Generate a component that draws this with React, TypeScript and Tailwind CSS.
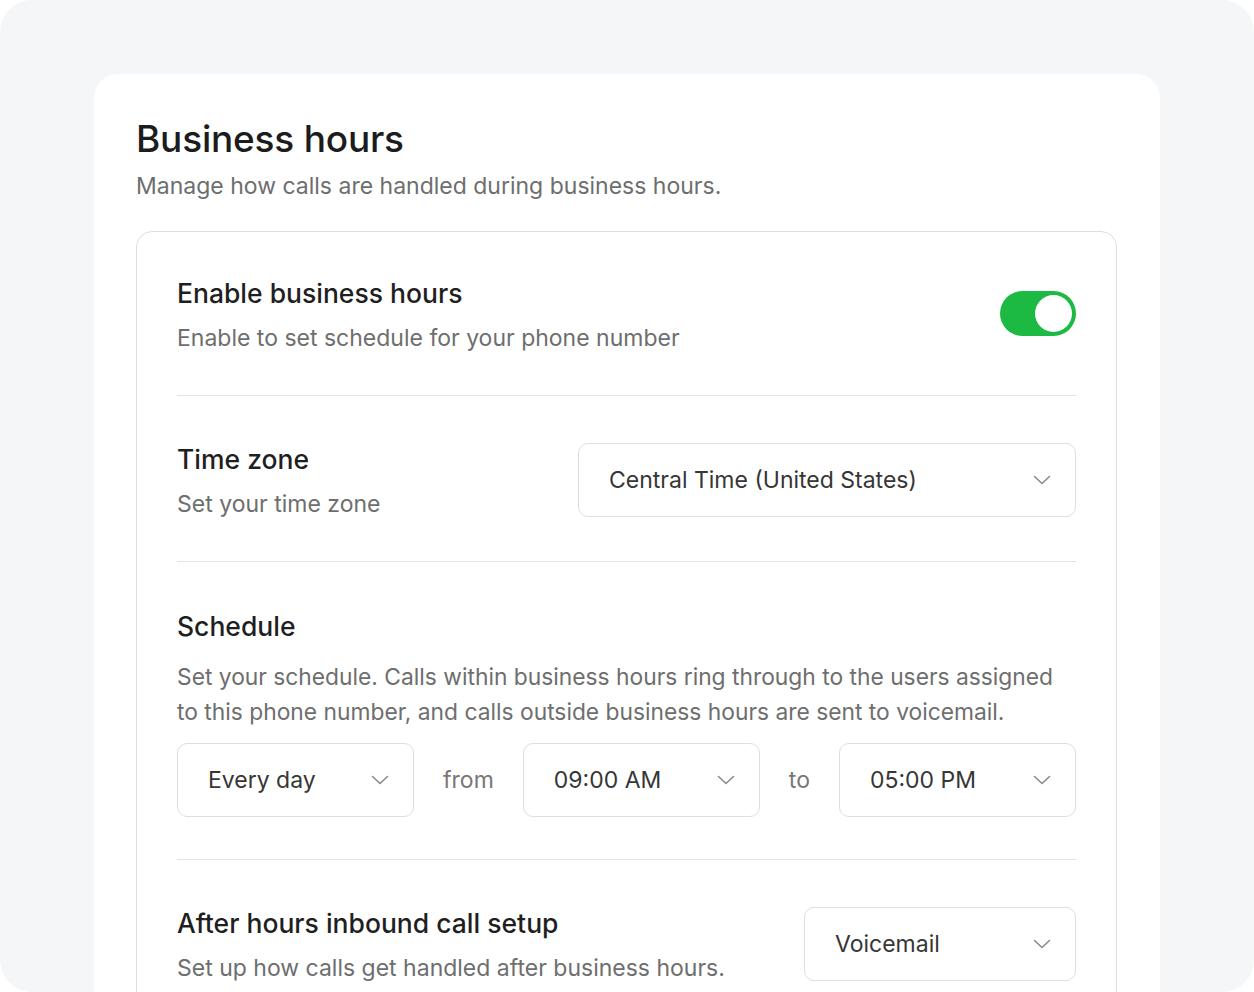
import React from "react"

const Chevron = () => (
  <svg width="18" height="10" viewBox="0 0 18 10" fill="none" className="shrink-0">
    <path d="M1.5 1.5L9 8.5L16.5 1.5" stroke="#8a8a8a" strokeWidth="1.6" strokeLinecap="round" strokeLinejoin="round" />
  </svg>
)

function Select({ value, className = "" }: { value: string; className?: string }) {
  return (
    <div className={`h-[74px] flex items-center justify-between pl-[30px] pr-[24px] border border-[#dedede] rounded-[10px] bg-white ${className}`}>
      <span className="text-[23px] text-[#363636] leading-[32px]">{value}</span>
      <Chevron />
    </div>
  )
}

function Toggle() {
  return (
    <div className="w-[76px] h-[45px] rounded-full bg-[#1dba43] flex items-center justify-end pr-[4px]">
      <div className="w-[37px] h-[37px] rounded-full bg-white" />
    </div>
  )
}

function Heading({ title, sub }: { title: string; sub: string }) {
  return (
    <div className="flex flex-col gap-[15px] translate-y-[2px]">
      <div className="text-[26.5px] leading-[30px] font-medium text-[#1f1f1f]">{title}</div>
      <div className="text-[23px] leading-[30px] text-[#6e6e6e]">{sub}</div>
    </div>
  )
}

export default function App() {
  return (
    <div className="w-[1254px] h-[992px] bg-white" style={{ fontFamily: "Inter, 'Noto Sans', sans-serif" }}>
      <div className="h-full rounded-[32px] bg-[#f5f6f7] overflow-hidden pt-[74px] px-[94px]">
        <div className="bg-white rounded-[24px] pl-[42px] pr-[43px] pt-[43px] pb-[40px]">
          <h1 className="text-[37px] leading-[44px] font-medium text-[#1c1c1c] tracking-[-0.2px]">Business hours</h1>
          <p className="mt-[9px] text-[23px] leading-[32px] text-[#6e6e6e]">Manage how calls are handled during business hours.</p>

          <div className="mt-[29px] border border-[#dedede] rounded-[16px] px-[40px]">
            <div className="flex items-center justify-between pt-[44px] pb-[44px] border-b border-[#e3e3e3]">
              <Heading title="Enable business hours" sub="Enable to set schedule for your phone number" />
              <Toggle />
            </div>

            <div className="flex items-center justify-between pt-[46px] pb-[44px] border-b border-[#e3e3e3]">
              <Heading title="Time zone" sub="Set your time zone" />
              <Select value="Central Time (United States)" className="w-[498px]" />
            </div>

            <div className="pt-[48px] pb-[42px] border-b border-[#e3e3e3]">
              <div className="text-[26.5px] leading-[32px] font-medium text-[#1f1f1f]">Schedule</div>
              <p className="mt-[17px] text-[22.8px] leading-[35px] text-[#6e6e6e]">
                Set your schedule. Calls within business hours ring through to the users assigned to this phone number, and calls outside business hours are sent to voicemail.
              </p>
              <div className="mt-[14px] flex items-center gap-[29px]">
                <Select value="Every day" className="flex-1" />
                <span className="text-[23px] text-[#777777]">from</span>
                <Select value="09:00 AM" className="flex-1" />
                <span className="text-[23px] text-[#777777]">to</span>
                <Select value="05:00 PM" className="flex-1" />
              </div>
            </div>

            <div className="flex items-center justify-between pt-[46px] pb-[45px]">
              <Heading title="After hours inbound call setup" sub="Set up how calls get handled after business hours." />
              <Select value="Voicemail" className="w-[272px]" />
            </div>
          </div>
        </div>
      </div>
    </div>
  )
}
